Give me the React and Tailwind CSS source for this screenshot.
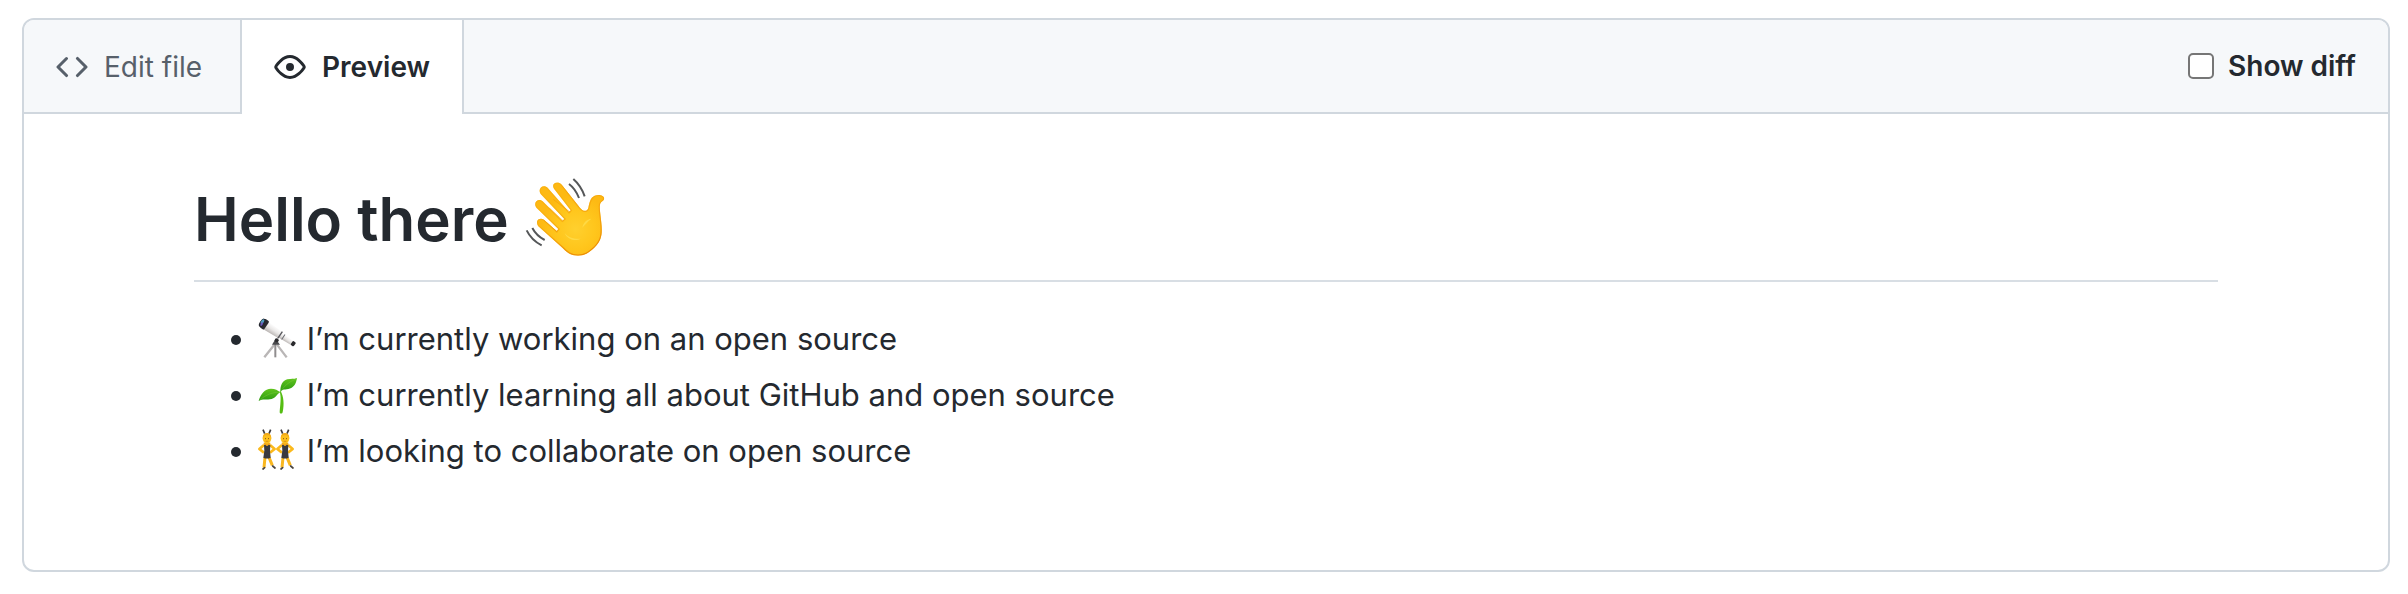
function CodeIcon() {
  return (
    <svg viewBox="0 0 16 16" className="size-8 shrink-0 fill-current" aria-hidden="true">
      <path d="M4.72 3.22a.75.75 0 011.06 1.06L2.06 8l3.72 3.72a.75.75 0 11-1.06 1.06L.47 8.53a.75.75 0 010-1.06l4.25-4.25zm6.56 0a.75.75 0 10-1.06 1.06L13.94 8l-3.72 3.72a.75.75 0 101.06 1.06l4.25-4.25a.75.75 0 000-1.06l-4.25-4.25z" />
    </svg>
  );
}

function EyeIcon() {
  return (
    <svg viewBox="0 0 16 16" className="size-8 shrink-0 fill-current" aria-hidden="true">
      <path
        fillRule="evenodd"
        d="M1.679 7.932c.412-.621 1.242-1.75 2.366-2.717C5.175 4.242 6.527 3.5 8 3.5c1.473 0 2.824.742 3.955 1.715 1.124.967 1.954 2.096 2.366 2.717a.119.119 0 010 .136c-.412.621-1.242 1.75-2.366 2.717C10.825 11.758 9.473 12.5 8 12.5c-1.473 0-2.824-.742-3.955-1.715C2.92 9.818 2.09 8.69 1.679 8.068a.119.119 0 010-.136zM8 2c-1.981 0-3.67.992-4.933 2.078C1.797 5.169.88 6.423.43 7.1a1.619 1.619 0 000 1.798c.45.678 1.367 1.932 2.637 3.024C4.329 13.008 6.019 14 8 14c1.981 0 3.67-.992 4.933-2.078 1.27-1.091 2.187-2.345 2.637-3.023a1.619 1.619 0 000-1.798c-.45-.678-1.367-1.932-2.637-3.023C11.671 2.992 9.981 2 8 2zm0 8a2 2 0 100-4 2 2 0 000 4z"
      />
    </svg>
  );
}

function WavingHand() {
  return (
    <svg viewBox="33 22 240 240" className="-mt-[2px] inline-block size-20 overflow-visible align-top" aria-hidden="true">
      <defs>
        <radialGradient id="skin" gradientUnits="userSpaceOnUse" cx="188" cy="178" r="105">
          <stop offset="0" stopColor="#ffd02e" />
          <stop offset="0.55" stopColor="#ffc61c" />
          <stop offset="1" stopColor="#fdb913" />
        </radialGradient>
        <linearGradient id="rim" gradientUnits="userSpaceOnUse" x1="130" y1="100" x2="225" y2="255">
          <stop offset="0" stopColor="#f7a90c" stopOpacity="0.5" />
          <stop offset="1" stopColor="#ea8a05" />
        </linearGradient>
        <clipPath id="hand">
          <path d="M72 158C71 147 86 144 93 150L131 184L136 178L71 115C58 99 76 83 89 95L148 153L154 148L83 73C72 56 92 41 105 56L168 127L173 122L123 57C113 42 133 32 145 44L198 111C211 127 222 127 226 115C229 101 231 84 245 78C258 72 277 78 273 89C271 95 263 96 261 105C259 119 263 136 265 160C268 190 267 211 246 232C226 251 214 258 195 258C172 258 160 246 148 234L76 170C73 166 72 162 72 158Z" />
        </clipPath>
      </defs>
      <g clipPath="url(#hand)">
        <rect x="60" y="30" width="220" height="232" fill="url(#skin)" />
        <path
          d="M72 158C71 147 86 144 93 150L131 184L136 178L71 115C58 99 76 83 89 95L148 153L154 148L83 73C72 56 92 41 105 56L168 127L173 122L123 57C113 42 133 32 145 44L198 111C211 127 222 127 226 115C229 101 231 84 245 78C258 72 277 78 273 89C271 95 263 96 261 105C259 119 263 136 265 160C268 190 267 211 246 232C226 251 214 258 195 258C172 258 160 246 148 234L76 170C73 166 72 162 72 158Z"
          fill="none"
          stroke="url(#rim)"
          strokeWidth="7"
        />
      </g>
      <path d="M93 152L132 186M110 116L150 153M122 90L171 127M147 48L198 112" fill="none" stroke="#f09a08" strokeWidth="3" strokeLinecap="round" opacity="0.55" />
      <path d="M155 190C168 205 185 209 204 207C188 216 163 211 155 190ZM208 174C211 158 221 149 235 147C222 158 215 166 208 174Z" fill="#ffe052" opacity="0.7" />
      <path d="M168 43Q187 57 198 85M181 28Q204 48 215 80M58 175Q70 198 95 211M41 182Q55 211 86 227" fill="none" stroke="#555759" strokeWidth="6" />
    </svg>
  );
}

function Telescope() {
  return (
    <svg viewBox="24 24 120 120" className="mt-[3px] inline-block size-10 overflow-visible align-top" aria-hidden="true">
      <defs>
        <linearGradient id="tube" x1="0" y1="0" x2="0" y2="1">
          <stop offset="0" stopColor="#ffffff" />
          <stop offset="0.5" stopColor="#e9e7e6" />
          <stop offset="1" stopColor="#b8b3b1" />
        </linearGradient>
      </defs>
      <path d="M73 104L43 142M81 104L110 142" stroke="#b9b6b6" strokeWidth="7" />
      <path d="M76 100V142" stroke="#908d8e" strokeWidth="6" />
      <path d="M66 104L77 86L90 104Z" fill="#49494c" />
      <g transform="translate(39 40) rotate(34)">
        <path d="M9 -14L62 -11V11L9 14Z" fill="url(#tube)" />
        <path d="M62 -9L106 -7V7L62 9Z" fill="url(#tube)" />
        <rect x="60" y="-12" width="4" height="24" fill="#55555a" />
        <rect x="72" y="-9" width="3" height="18" fill="#6a6b70" />
        <rect x="-3" y="-15" width="16" height="30" rx="4" fill="#2a2b31" />
        <ellipse cx="-3" cy="0" rx="7" ry="14" fill="#24262e" />
        <ellipse cx="-4" cy="-3" rx="4" ry="8" fill="#4d9fc4" />
        <ellipse cx="-2" cy="4" rx="3" ry="6" fill="#6b58bd" />
        <rect x="104" y="-7" width="11" height="14" rx="3" fill="#29292c" />
      </g>
      <circle cx="80" cy="91" r="6" fill="#2b2b2e" />
    </svg>
  );
}

function Seedling() {
  return (
    <svg viewBox="24 24 120 120" className="mt-[3px] inline-block size-10 overflow-visible align-top" aria-hidden="true">
      <defs>
        <linearGradient id="leaf" x1="0" y1="0" x2="0" y2="1">
          <stop offset="0" stopColor="#62c51e" />
          <stop offset="1" stopColor="#2a9a10" />
        </linearGradient>
      </defs>
      <path d="M89 77C95 94 90 120 89 138C89 144 97 144 98 138C103 116 101 91 92 75Z" fill="#55bd13" />
      <path d="M26 105C33 82 44 69 63 68C76 68 83 73 91 79C81 83 80 95 65 99C50 102 38 98 26 105Z" fill="url(#leaf)" />
      <path d="M91 77C91 59 96 45 112 40C124 37 131 40 141 36C139 48 136 58 125 65C111 73 99 66 91 77Z" fill="url(#leaf)" />
      <path d="M29 102Q58 77 91 79Q105 52 138 39" fill="none" stroke="#7fd040" strokeWidth="2" opacity="0.6" />
    </svg>
  );
}

function Dancer({ x }) {
  return (
    <g transform={`translate(${x} 0)`}>
      <path d="M39 23L44 35M62 23L57 35" stroke="#3b3a3f" strokeWidth="5" />
      <path d="M45 106L42 137M57 106L67 130" stroke="#f9b71f" strokeWidth="9" fill="none" />
      <path d="M44 137L39 141M68 132L75 138" stroke="#4a4540" strokeWidth="5" strokeLinecap="round" />
      <path d="M42 69L28 81L42 92M60 69L74 81L60 92" fill="none" stroke="#fbb91c" strokeWidth="8" strokeLinejoin="round" />
      <rect x="41" y="62" width="20" height="10" fill="#f2a71c" />
      <ellipse cx="51" cy="49" rx="13" ry="16" fill="#fdc01d" />
      <path d="M38 47C39 28 63 28 64 47L57 40H45Z" fill="#f0a81a" />
      <path d="M45 50h3M54 50h3" stroke="#845018" strokeWidth="3" />
      <path d="M47 58h8" stroke="#c97a16" strokeWidth="2" />
      <path d="M42 70L46 68Q51 76 56 68L61 70L60 86L62 107Q51 112 40 107L43 86Z" fill="#3a3a3f" />
    </g>
  );
}

function Dancers() {
  return (
    <svg viewBox="24 24 120 120" className="mt-[3px] inline-block size-10 overflow-visible align-top" aria-hidden="true">
      <Dancer x={0} />
      <Dancer x={54} />
    </svg>
  );
}

const items = [
  { icon: Telescope, text: "I’m currently working on an open source" },
  { icon: Seedling, text: "I’m currently learning all about GitHub and open source" },
  { icon: Dancers, text: "I’m looking to collaborate on open source" },
];

export default function App() {
  return (
    <main className="bg-white pt-[18px] pr-[18px] pb-[22px] pl-[22px] font-['Inter','Liberation_Sans',sans-serif] text-[#24292f]">
      <section className="rounded-xl border-2 border-[#d0d7de]">
        <header className="flex items-stretch justify-between rounded-t-[10px] border-b-2 border-[#d0d7de] bg-[#f6f8fa]">
          <div role="tablist" className="flex text-[28px] leading-[42px]">
            <button type="button" role="tab" aria-selected="false" className="flex items-center gap-4 pt-[26px] pr-[38px] pb-6 pl-8 text-[#57606a]">
              <CodeIcon />
              Edit file
            </button>
            <button
              type="button"
              role="tab"
              aria-selected="true"
              className="-mb-[2px] flex items-center gap-4 border-x-2 border-[#d0d7de] bg-white px-8 font-semibold"
            >
              <EyeIcon />
              Preview
            </button>
          </div>
          <label className="flex items-center gap-[14px] pr-8 text-[28px] leading-[42px] font-semibold">
            <input type="checkbox" className="size-[26px] appearance-none rounded-[5px] border-2 border-[#767676] bg-white checked:bg-[#0969da]" />
            Show diff
          </label>
        </header>
        <article className="mx-auto max-w-[2024px] pt-[65px] pb-[95px]">
          <h1 className="mb-[33px] border-b-2 border-[#d8dee4] pb-[21px] text-[60px] leading-[80px] font-semibold">
            Hello there <WavingHand />
          </h1>
          <ul className="flex list-disc flex-col gap-2 pl-16 text-[31px] leading-[48px]">
            {items.map(({ icon: Icon, text }) => (
              <li key={text}>
                <Icon /> {text}
              </li>
            ))}
          </ul>
        </article>
      </section>
    </main>
  );
}
